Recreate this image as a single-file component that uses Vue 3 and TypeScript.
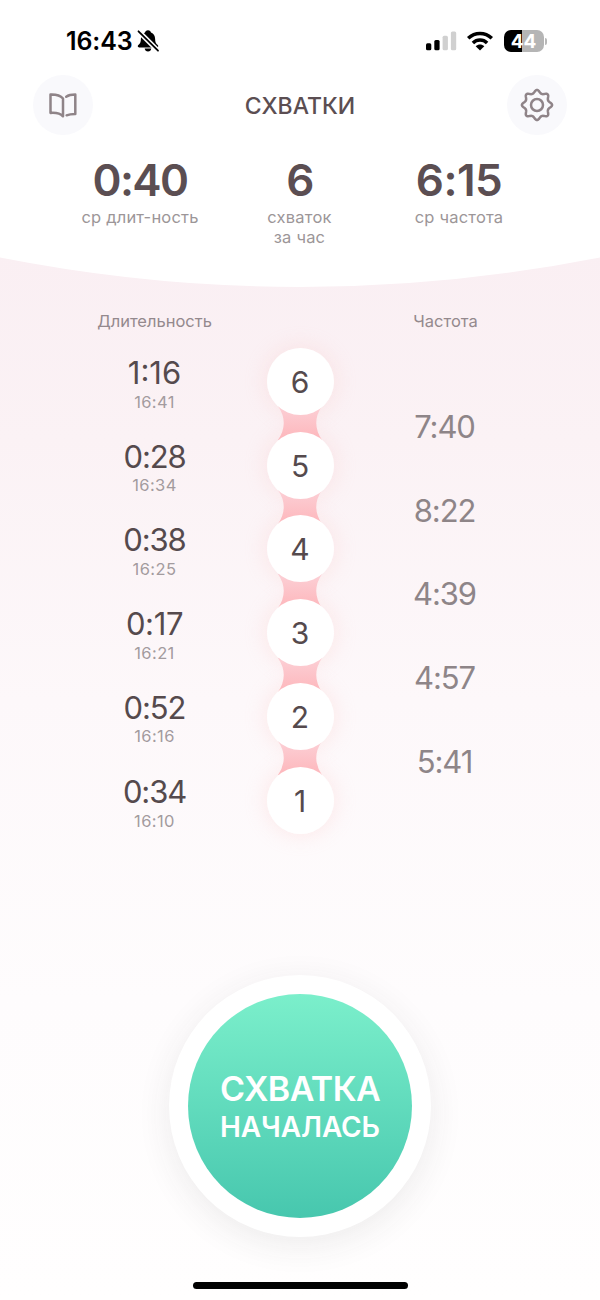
<script setup lang="ts">
interface Contraction {
  index: number
  duration: string
  startedAt: string
}

const stats: { value: string; label: string[] }[] = [
  { value: '0:40', label: ['ср длит-ность'] },
  { value: '6', label: ['схваток', 'за час'] },
  { value: '6:15', label: ['ср частота'] },
]

const contractions: Contraction[] = [
  { index: 6, duration: '1:16', startedAt: '16:41' },
  { index: 5, duration: '0:28', startedAt: '16:34' },
  { index: 4, duration: '0:38', startedAt: '16:25' },
  { index: 3, duration: '0:17', startedAt: '16:21' },
  { index: 2, duration: '0:52', startedAt: '16:16' },
  { index: 1, duration: '0:34', startedAt: '16:10' },
]

const intervals: string[] = ['7:40', '8:22', '4:39', '4:57', '5:41']

// Narrow ones need less tightening than the wide digits.
function tracking(value: string): { letterSpacing: string } {
  const ones = value.split('1').length - 1
  return { letterSpacing: `${Math.min(0, -0.036 + 0.024 * ones)}em` }
}

// Eight-lobed gear outline, sampled in polar coordinates.
const gearPath: string = (() => {
  const points: string[] = []
  for (let i = 0; i < 160; i++) {
    const a = (i / 160) * Math.PI * 2
    const r = 13.4 + 1.55 * Math.cos(8 * a) + 0.15 * Math.cos(16 * a)
    points.push(`${(18 + r * Math.sin(a)).toFixed(2)} ${(18 - r * Math.cos(a)).toFixed(2)}`)
  }
  return `M${points.join('L')}Z`
})()
</script>

<template>
  <main class="screen">
    <section class="top">
      <div class="status">
        <div class="clock">
          <span>16:43</span>
          <svg class="bell" width="24" height="24" viewBox="0 0 24 24">
            <path d="M12 1.200c-1.700 0-2.800 1-3 2.300C6.300 4.500 4.900 7 4.900 9.800c0 3.700-.9 4.700-2.600 6.300-1 1-.6 2.300.8 2.300h17.800c1.400 0 1.800-1.300.8-2.300-1.700-1.600-2.600-2.600-2.600-6.300 0-2.800-1.400-5.300-4.100-6.300C14.800 2.200 13.700 1.200 12 1.200Z" />
            <path d="M8.700 19.600h6.600c-.2 1.800-1.500 3-3.300 3s-3.100-1.200-3.300-3Z" />
            <path class="gap" d="M2.500 2.300 22 21.700" />
            <path class="slash" d="M2.500 2.300 22 21.700" />
          </svg>
        </div>
        <div class="indicators">
          <svg width="32" height="20" viewBox="0 0 32 20">
            <rect x="0" y="12.200" width="5.300" height="7" rx="1.500" />
            <rect x="8.300" y="9" width="5.300" height="10.200" rx="1.500" />
            <rect class="off" x="16.600" y="4.800" width="5.300" height="14.400" rx="1.500" />
            <rect class="off" x="24.900" y="0.500" width="5.300" height="18.700" rx="1.500" />
          </svg>
          <svg class="wifi" width="28" height="20" viewBox="0 0 28 20">
            <path d="M2.200 7.300C9 .8 19 .8 25.800 7.300" />
            <path d="M6.900 12c4.100-3.900 10.100-3.900 14.200 0" />
            <path class="dot" d="M9.700 15.200c2.500-2.200 6.100-2.200 8.600 0L14 19.500Z" />
          </svg>
          <div class="battery"><span class="level">44</span><i class="cap"></i></div>
        </div>
      </div>

      <header class="bar">
        <button class="round" aria-label="Журнал">
          <svg width="30" height="28" viewBox="0 0 30 28">
            <path d="M2.500 3.500C8 3.300 12.300 4.400 15 7.500V25.300C12.400 22.400 8 21.500 2.500 21.900Z" />
            <path d="M18.200 5.700C20.500 4.100 23.500 3.500 27.300 3.500V22.900C24 22.900 21 23.200 18.600 24.300" />
          </svg>
        </button>
        <h1>СХВАТКИ</h1>
        <button class="round" aria-label="Настройки">
          <svg width="36" height="36" viewBox="0 0 36 36">
            <path :d="gearPath" />
            <circle cx="18" cy="18" r="6" />
          </svg>
        </button>
      </header>

      <div class="stats">
        <div v-for="s in stats" :key="s.value" class="stat">
          <strong :style="tracking(s.value)">{{ s.value }}</strong>
          <span v-for="line in s.label" :key="line">{{ line }}</span>
        </div>
      </div>
    </section>

    <svg class="curve" width="600" height="31" viewBox="0 0 600 31">
      <path d="M0 0.500Q300 59.500 600 0.500V0H0Z" />
    </svg>

    <div class="titles">
      <span>Длительность</span>
      <span></span>
      <span>Частота</span>
    </div>

    <section class="log">
      <div class="durations">
        <div v-for="c in contractions" :key="c.index" class="duration">
          <b :style="tracking(c.duration)">{{ c.duration }}</b>
          <small>{{ c.startedAt }}</small>
        </div>
      </div>
      <div class="chain">
        <template v-for="(c, i) in contractions" :key="c.index">
          <svg v-if="i > 0" class="link" width="44" height="34" viewBox="0 0 44 34">
            <defs>
              <linearGradient :id="'link' + i" x1="0" y1="0" x2="0" y2="1">
                <stop offset="0.1" stop-color="#fccdd3" />
                <stop offset="0.9" stop-color="#fdb9be" />
              </linearGradient>
            </defs>
            <path :fill="`url(#link${i})`" d="M0 0Q11.500 17 0 34H44Q32.500 17 44 0Z" />
          </svg>
          <div class="node">{{ c.index }}</div>
        </template>
      </div>
      <div class="intervals">
        <span v-for="v in intervals" :key="v">{{ v }}</span>
      </div>
    </section>

    <button class="start">
      <span class="face">
        <span class="big">СХВАТКА</span>
        <span class="small">НАЧАЛАСЬ</span>
      </span>
    </button>

    <div class="home"></div>
  </main>
</template>

<style>
body {
  margin: 0;
  background: #fff;
}
</style>

<style scoped>
.screen {
  width: 600px;
  height: 1300px;
  overflow: hidden;
  display: flex;
  flex-direction: column;
  align-items: center;
  font-family: Inter, "Liberation Sans", sans-serif;
  color: #554a4d;
  background: linear-gradient(#faeff3 250px, #fbf2f5 440px, #fdf8fa 700px, #fefcfd 1000px, #fffefe 1300px);
}
button {
  border: 0;
  padding: 0;
  font: inherit;
}
.top {
  width: 600px;
  height: 257px;
  background: #fff;
}
.status {
  height: 75px;
  box-sizing: border-box;
  padding: 7px 53px 0 66px;
  display: flex;
  justify-content: space-between;
  align-items: center;
  color: #000;
}
.clock {
  display: flex;
  align-items: center;
  gap: 3px;
  font-size: 25px;
  font-weight: 600;
  letter-spacing: -0.1px;
}
.bell .gap {
  stroke: #fff;
  stroke-width: 5;
}
.bell .slash {
  stroke: #000;
  stroke-width: 1.800;
  stroke-linecap: round;
}
.indicators {
  display: flex;
  align-items: center;
}
.off {
  fill: #d0d0d0;
}
.wifi {
  margin: 0 10px 0 8px;
}
.wifi path {
  fill: none;
  stroke: #000;
  stroke-width: 3.500;
}
.wifi .dot {
  fill: #000;
  stroke: none;
}
.battery {
  display: flex;
  align-items: center;
  gap: 1px;
}
.level {
  width: 40px;
  height: 22px;
  line-height: 23px;
  border-radius: 7px;
  text-align: center;
  color: #fff;
  font-size: 19px;
  font-weight: 700;
  background: linear-gradient(90deg, #000 44%, #b5b5b5 44%);
}
.cap {
  width: 2.500px;
  height: 7px;
  border-radius: 0 3px 3px 0;
  background: #b8b8b8;
}
.bar {
  height: 60px;
  padding: 0 33px;
  display: flex;
  align-items: center;
  justify-content: space-between;
}
.round {
  width: 60px;
  height: 60px;
  border-radius: 50%;
  background: #f9f9fc;
  display: flex;
  align-items: center;
  justify-content: center;
}
.round svg {
  fill: none;
  stroke: #8f8488;
  stroke-width: 2.500;
  stroke-linecap: round;
  stroke-linejoin: round;
}
h1 {
  margin: 0;
  padding-top: 2px;
  font-size: 23px;
  font-weight: 450;
  line-height: 30px;
  color: #5b4e52;
}
.stats {
  display: grid;
  grid-template-columns: repeat(3, 159.500px);
  justify-content: center;
  padding: 23px 1px 0 0;
}
.stat {
  display: flex;
  flex-direction: column;
  align-items: center;
  font-size: 16.500px;
  line-height: 20px;
  letter-spacing: 0.2px;
  color: #9c9698;
}
.stat strong {
  font-size: 44px;
  line-height: 44px;
  margin-bottom: 5px;
  font-weight: 600;
  color: #5b4e52;
}
.curve {
  display: block;
  fill: #fff;
}
.titles,
.log {
  display: grid;
  grid-template-columns: 145px 146px 145px;
}
.titles {
  margin-top: 23px;
  height: 20px;
  line-height: 20px;
  font-size: 16.500px;
  text-align: center;
  color: #94898d;
}
.log {
  margin-top: 17px;
  height: 486px;
}
.durations,
.intervals {
  display: flex;
  flex-direction: column;
}
.durations {
  padding-top: 8px;
}
.duration {
  height: 83.700px;
  display: flex;
  flex-direction: column;
  align-items: center;
}
.duration b {
  font-weight: 400;
  font-size: 31px;
  line-height: 34px;
}
.duration small {
  margin-top: 1.600px;
  font-size: 16.500px;
  line-height: 20px;
  letter-spacing: 0.4px;
  color: #a39b9e;
}
.duration:last-child {
  padding-top: 1px;
}
.chain {
  isolation: isolate;
  display: flex;
  flex-direction: column;
  align-items: center;
}
.node {
  position: relative;
  width: 67px;
  height: 67px;
  flex: none;
  border-radius: 50%;
  background: #fff;
  font-size: 30px;
  line-height: 69px;
  text-align: center;
}
.node::before {
  content: "";
  position: absolute;
  inset: 0;
  z-index: -2;
  border-radius: 50%;
  box-shadow: 0 0 20px 2px rgba(252, 200, 195, 0.3);
}
.link {
  position: relative;
  z-index: -1;
  flex: none;
  margin: -8.650px 0;
}
.intervals {
  padding: 37px 2px 0 0;
}
.intervals span {
  height: 83.700px;
  line-height: 84px;
  text-align: center;
  font-size: 31px;
  letter-spacing: -1.100px;
  color: #8e8588;
}
.start {
  margin-top: 141px;
  width: 262px;
  height: 262px;
  flex: none;
  border-radius: 50%;
  background: #fff;
  display: flex;
  align-items: center;
  justify-content: center;
  box-shadow: 0 8px 34px rgba(60, 50, 55, 0.09);
}
.face {
  box-sizing: border-box;
  width: 224px;
  height: 224px;
  padding-top: 2px;
  border-radius: 50%;
  display: flex;
  flex-direction: column;
  align-items: center;
  justify-content: center;
  color: #fff;
  font-weight: 600;
  background: linear-gradient(#7befcb, #47c7ae);
}
.big {
  font-size: 34px;
  line-height: 40px;
  letter-spacing: -0.6px;
}
.small {
  font-size: 28px;
  line-height: 36px;
  letter-spacing: -0.1px;
}
.home {
  margin-top: 45px;
  width: 215px;
  height: 7px;
  flex: none;
  border-radius: 4px;
  background: #000;
}
</style>
